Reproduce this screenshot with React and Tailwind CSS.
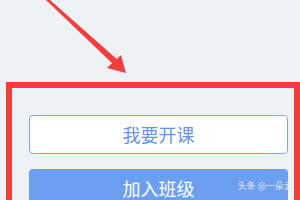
export default function App() {
  return (
    <div className="relative h-[200px] w-[300px] overflow-hidden bg-[#eef2f5] font-['Noto_Sans_CJK_SC',sans-serif]">
      {/* annotation arrow */}
      <svg className="absolute left-0 top-0" width="140" height="80" viewBox="0 0 140 80">
        <polygon points="46,0 50,0 119,61 114,65" fill="#f23d3d" />
        <polygon points="121,55 126,73 107,68" fill="#f23d3d" />
      </svg>

      {/* annotation box */}
      <div className="ml-[6px] mt-[82px] h-[140px] w-[294px] border-[6px] border-[#f23d3d]">
        <div className="ml-[17px] mr-[6px] flex flex-col gap-[15px] pt-[27px]">
          <button className="flex h-[39px] w-full items-center justify-center rounded-[4px] border border-[#86a6e0] bg-white text-[18px] text-[#6b93db]">
            我要开课
          </button>
          <button className="relative flex h-[39px] w-full items-center justify-center rounded-[4px] bg-[#6d9ff0] text-[18px] text-white">
            加入班级
          </button>
        </div>
      </div>

      {/* watermark */}
      <div className="absolute right-[7px] top-[180px] z-10 flex items-center gap-[2px] whitespace-nowrap text-[9px] leading-[12px] text-[#e3e8f0]">
        <span>头条</span>
        <span>@一朵云</span>
      </div>
    </div>
  );
}
